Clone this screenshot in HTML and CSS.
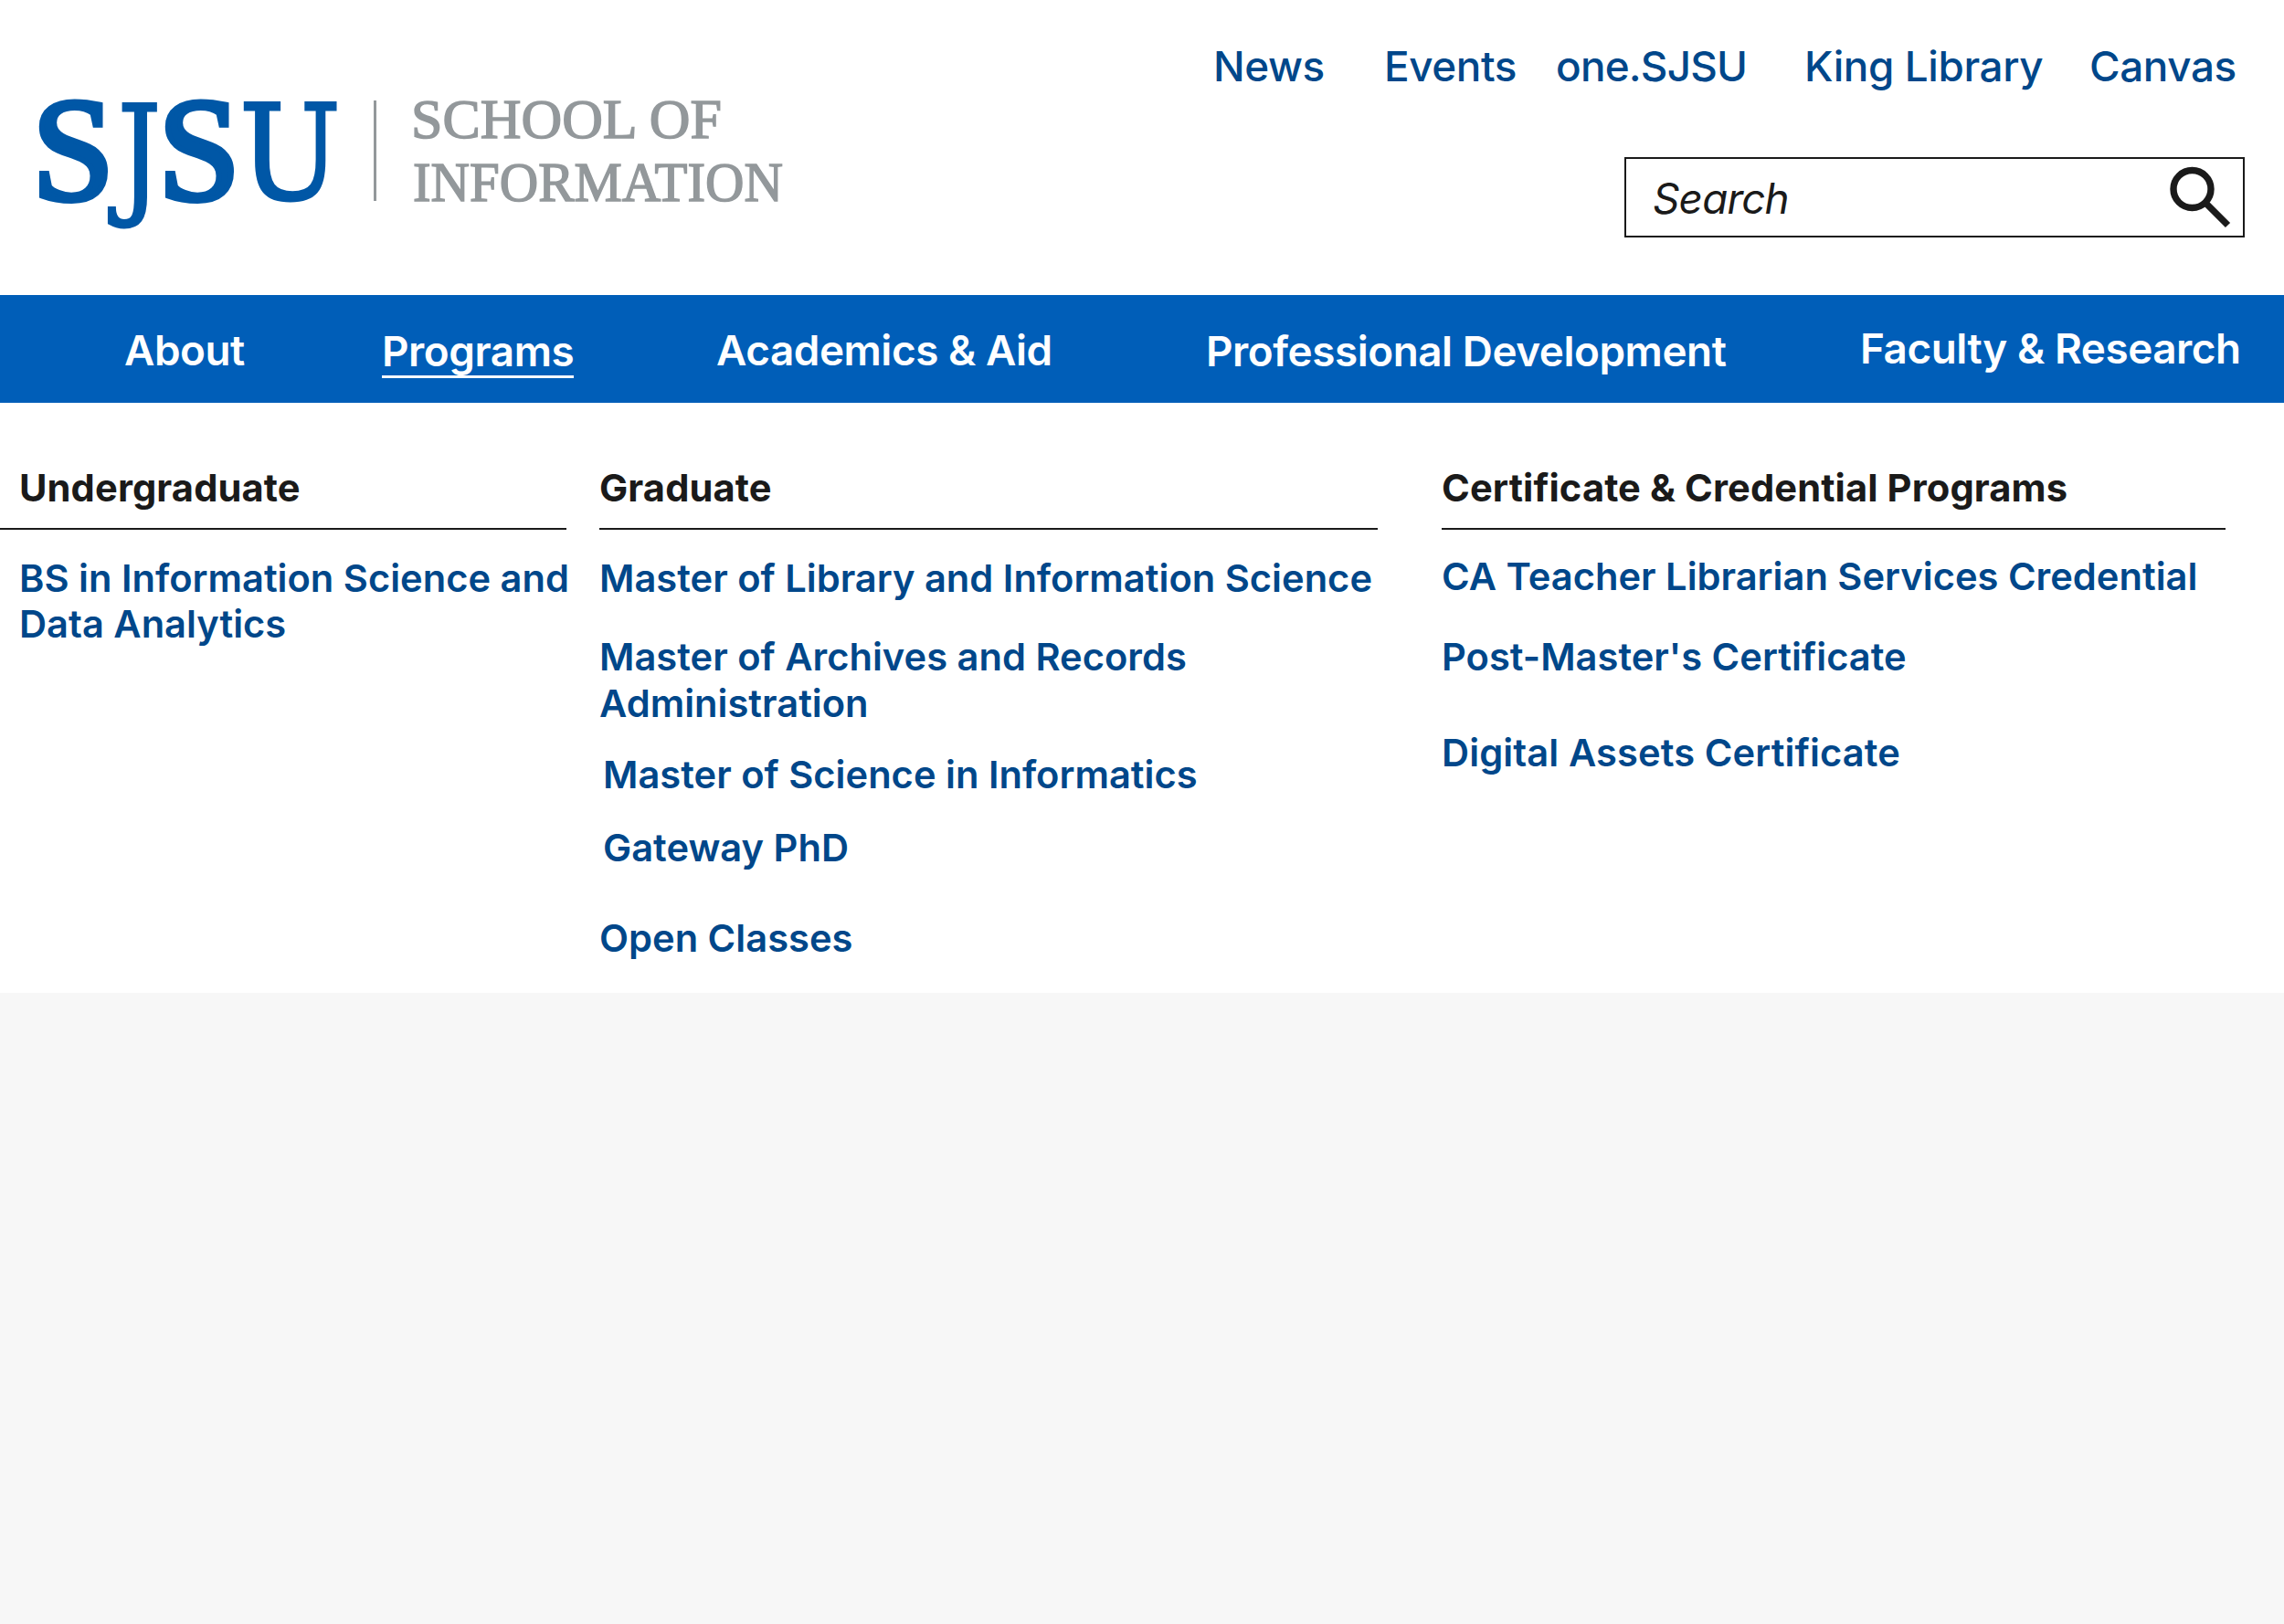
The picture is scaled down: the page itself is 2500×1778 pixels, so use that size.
FILE: index.html
```html
<!DOCTYPE html>
<html lang="en">
<head>
<meta charset="utf-8">
<title>SJSU School of Information</title>
<link rel="stylesheet" href="styles.css">
</head>
<body>
<header class="header">
  <a class="logo" aria-label="SJSU School of Information">
    <svg width="900" height="300" viewBox="0 0 900 300">
      <g class="logo-main">
        <text class="logo-s" x="35" y="218" textLength="90" lengthAdjust="spacingAndGlyphs">S</text>
        <text class="logo-slab" x="129" y="219" textLength="47" lengthAdjust="spacingAndGlyphs">J</text>
        <text class="logo-s" x="173" y="218" textLength="90" lengthAdjust="spacingAndGlyphs">S</text>
        <text class="logo-slab" x="262" y="218" textLength="111" lengthAdjust="spacingAndGlyphs">U</text>
      </g>
      <rect class="logo-rule" x="409" y="110" width="3" height="110"/>
      <g class="logo-sub">
        <text x="450" y="151" textLength="340" lengthAdjust="spacingAndGlyphs">SCHOOL OF</text>
        <text x="452" y="220" textLength="405" lengthAdjust="spacingAndGlyphs">INFORMATION</text>
      </g>
    </svg>
  </a>
  <div class="tools">
    <nav class="quick">
      <a>News</a><a>Events</a><a class="one">one.SJSU</a><a>King Library</a><a>Canvas</a>
    </nav>
    <form class="search">
      <input class="search-input" type="text" placeholder="Search">
      <svg class="search-icon" width="70" height="70" viewBox="0 0 70 70">
        <circle cx="25.5" cy="25" r="20.5"/>
        <path d="M39.5 39.5 64.5 64.5"/>
      </svg>
    </form>
  </div>
</header>
<nav class="bar">
  <a>About</a>
  <a class="low"><span class="current">Programs</span></a>
  <a>Academics &amp; Aid</a>
  <a class="low">Professional Development</a>
  <a class="high">Faculty &amp; Research</a>
</nav>
<section class="menu">
  <div class="col col-under">
    <h2>Undergraduate</h2>
    <ul>
      <li>BS in Information Science and<br>Data Analytics</li>
    </ul>
  </div>
  <div class="col col-grad">
    <h2>Graduate</h2>
    <ul>
      <li>Master of Library and Information Science</li>
      <li class="archives">Master of Archives and Records<br>Administration</li>
      <li class="informatics">Master of Science in Informatics</li>
      <li class="phd">Gateway PhD</li>
      <li class="open">Open Classes</li>
    </ul>
  </div>
  <div class="col col-cert">
    <h2>Certificate &amp; Credential Programs</h2>
    <ul>
      <li>CA Teacher Librarian Services Credential</li>
      <li class="post">Post-Master's Certificate</li>
      <li class="digital">Digital Assets Certificate</li>
    </ul>
  </div>
</section>
</body>
</html>
```
FILE: styles.css
```css
* { box-sizing: border-box; }
body {
  margin: 0;
  min-height: 1778px;
  background: #f7f7f7;
  font-family: Inter, "Liberation Sans", sans-serif;
  color: #1a1a1a;
}
.header {
  display: flex;
  justify-content: space-between;
  height: 323px;
  background: #fff;
}
.logo svg { display: block; }
.logo-main { fill: #0057a6; stroke: #0057a6; }
.logo-s { font: 160px "Liberation Serif", serif; stroke-width: 6px; }
.logo-slab { font: 144px "DejaVu Serif", serif; stroke-width: 3px; }
.logo-rule { fill: #93989b; }
.logo-sub {
  font: 62px "Liberation Serif", serif;
  fill: #93989b;
  stroke: #93989b;
  stroke-width: 1.5px;
}
.tools { width: 1172px; padding-top: 45px; }
.quick {
  display: grid;
  grid-template-columns: 187px 188px 272px 312px auto;
  font-size: 45.83px;
  line-height: 55px;
  font-weight: 500;
  letter-spacing: -0.4px;
  color: #00478a;
  white-space: nowrap;
}
.one { letter-spacing: -0.8px; }
.search {
  display: flex;
  justify-content: space-between;
  width: 679px;
  height: 88px;
  margin: 72px 0 0 450px;
  padding: 8px 11px 0 29px;
  border: 2px solid #1a1a1a;
}
.search-input {
  width: 400px;
  height: 56px;
  padding: 0;
  border: 0;
  outline: 0;
  background: none;
  margin-top: 8px;
  font: italic 400 45.83px/56px Inter, "Liberation Sans", sans-serif;
  letter-spacing: -0.8px;
}
.search-input::placeholder { color: #1a1a1a; opacity: 1; }
.search-icon { fill: none; stroke: #1a1a1a; stroke-width: 7.4px; }
.bar {
  display: grid;
  grid-template-columns: 282px 366px 536px 716px auto;
  height: 118px;
  padding: 33px 0 0 136px;
  background: #005eb8;
  color: #fff;
  font-size: 45.83px;
  line-height: 55px;
  font-weight: 600;
  letter-spacing: -0.45px;
  white-space: nowrap;
}
.low { padding-top: 1px; }
.high { margin-top: -2px; }
.current { display: inline-block; height: 57px; border-bottom: 3px solid #fff; }
.menu {
  display: flex;
  height: 646px;
  padding-top: 68px;
  background: #fff;
  font-size: 41.667px;
  line-height: 50.4px;
  font-weight: 600;
  white-space: nowrap;
}
.col-under { width: 620px; margin-right: 36px; }
.menu .col-under h2, .menu .col-under ul { padding-left: 21px; }
.col-grad { width: 852px; margin-right: 70px; }
.col-cert { width: 858px; }
.menu h2 {
  height: 71px;
  margin: 0;
  border-bottom: 2px solid #1a1a1a;
  font-size: inherit;
  font-weight: 700;
  letter-spacing: 0.1px;
}
.menu ul {
  margin: 0;
  padding: 28px 0 0;
  list-style: none;
  color: #00478a;
}
.menu .col-cert ul { padding-top: 26px; }
.archives { margin-top: 36px; }
.informatics { margin-top: 27.9px; padding-left: 4px; }
.phd { margin-top: 29.4px; padding-left: 4px; }
.open { margin-top: 48.5px; }
.post { margin-top: 38px; }
.digital { margin-top: 54px; letter-spacing: 0.1px; }
```
